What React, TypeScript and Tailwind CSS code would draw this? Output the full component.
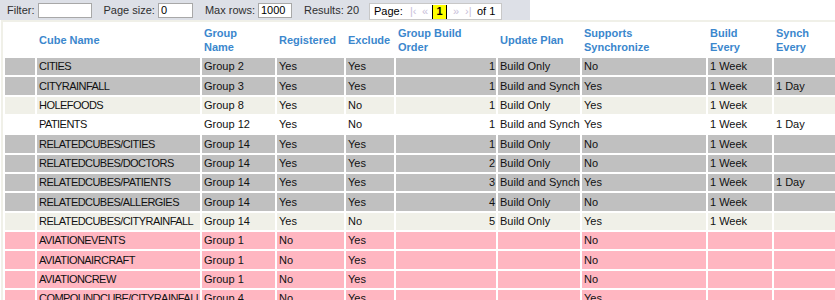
import React from "react";

type Tone = "gray" | "beige" | "white" | "pink";

interface CubeRow {
  name: string;
  group: string;
  registered: string;
  exclude: string;
  order: string;
  plan: string;
  sync: string;
  buildEvery: string;
  synchEvery: string;
  tone: Tone;
}

const rows: CubeRow[] = [
  { name: "CITIES", group: "Group 2", registered: "Yes", exclude: "Yes", order: "1", plan: "Build Only", sync: "No", buildEvery: "1 Week", synchEvery: "", tone: "gray" },
  { name: "CITYRAINFALL", group: "Group 3", registered: "Yes", exclude: "Yes", order: "1", plan: "Build and Synch", sync: "Yes", buildEvery: "1 Week", synchEvery: "1 Day", tone: "gray" },
  { name: "HOLEFOODS", group: "Group 8", registered: "Yes", exclude: "No", order: "1", plan: "Build Only", sync: "Yes", buildEvery: "1 Week", synchEvery: "", tone: "beige" },
  { name: "PATIENTS", group: "Group 12", registered: "Yes", exclude: "No", order: "1", plan: "Build and Synch", sync: "Yes", buildEvery: "1 Week", synchEvery: "1 Day", tone: "white" },
  { name: "RELATEDCUBES/CITIES", group: "Group 14", registered: "Yes", exclude: "Yes", order: "1", plan: "Build Only", sync: "No", buildEvery: "1 Week", synchEvery: "", tone: "gray" },
  { name: "RELATEDCUBES/DOCTORS", group: "Group 14", registered: "Yes", exclude: "Yes", order: "2", plan: "Build Only", sync: "No", buildEvery: "1 Week", synchEvery: "", tone: "gray" },
  { name: "RELATEDCUBES/PATIENTS", group: "Group 14", registered: "Yes", exclude: "Yes", order: "3", plan: "Build and Synch", sync: "Yes", buildEvery: "1 Week", synchEvery: "1 Day", tone: "gray" },
  { name: "RELATEDCUBES/ALLERGIES", group: "Group 14", registered: "Yes", exclude: "Yes", order: "4", plan: "Build Only", sync: "No", buildEvery: "1 Week", synchEvery: "", tone: "gray" },
  { name: "RELATEDCUBES/CITYRAINFALL", group: "Group 14", registered: "Yes", exclude: "No", order: "5", plan: "Build Only", sync: "Yes", buildEvery: "1 Week", synchEvery: "", tone: "beige" },
  { name: "AVIATIONEVENTS", group: "Group 1", registered: "No", exclude: "Yes", order: "", plan: "", sync: "No", buildEvery: "", synchEvery: "", tone: "pink" },
  { name: "AVIATIONAIRCRAFT", group: "Group 1", registered: "No", exclude: "Yes", order: "", plan: "", sync: "No", buildEvery: "", synchEvery: "", tone: "pink" },
  { name: "AVIATIONCREW", group: "Group 1", registered: "No", exclude: "Yes", order: "", plan: "", sync: "No", buildEvery: "", synchEvery: "", tone: "pink" },
  { name: "COMPOUNDCUBE/CITYRAINFALL", group: "Group 4", registered: "No", exclude: "Yes", order: "", plan: "", sync: "Yes", buildEvery: "", synchEvery: "", tone: "pink" },
];

const toneClass: Record<Tone, string> = {
  gray: "bg-[#c0c0c0]",
  beige: "bg-[#f0f0e8]",
  white: "bg-white",
  pink: "bg-[#ffb6c1]",
};

const headers = [
  "",
  "Cube Name",
  "Group\nName",
  "Registered",
  "Exclude",
  "Group Build\nOrder",
  "Update Plan",
  "Supports\nSynchronize",
  "Build\nEvery",
  "Synch\nEvery",
];

function Toolbar() {
  return (
    <div className="flex h-[20px] w-[530px] items-center bg-[#dde0e7] text-[11px] text-[#2f2f2f]">
      <span className="ml-[7px]">Filter:</span>
      <input
        className="ml-[3px] h-[15px] w-[54px] border border-[#a8a8a8] bg-white px-[2px] text-[11px] text-black outline-none"
        defaultValue=""
      />
      <span className="ml-[12px]">Page size:</span>
      <input
        className="ml-[3px] h-[15px] w-[35px] border border-[#a8a8a8] bg-white px-[2px] text-[11px] text-black outline-none"
        defaultValue="0"
      />
      <span className="ml-[12px]">Max rows:</span>
      <input
        className="ml-[3px] h-[15px] w-[34px] border border-[#a8a8a8] bg-white px-[2px] text-[11px] text-black outline-none"
        defaultValue="1000"
      />
      <span className="ml-[12px]">Results: 20</span>
      <div className="ml-auto mr-[28px] mt-[3px] flex h-[17px] w-[133px] items-center border border-[#c8c8c8] bg-white text-black">
        <span className="w-[36px] pl-[4px]">Page:</span>
        <span className="w-[16px] pl-[4px] text-[11px] text-[#c9c0da]">|‹</span>
        <span className="w-[10px] text-[11px] text-[#c9c0da]">«</span>
        <span className="flex h-[14px] w-[15px] items-center justify-center border-x border-black bg-[#ffff00] font-bold">
          1
        </span>
        <span className="ml-[6px] w-[12px] text-[11px] text-[#c9c0da]">»</span>
        <span className="w-[12px] text-[11px] text-[#c9c0da]">›|</span>
        <span>of 1</span>
      </div>
    </div>
  );
}

export default function App() {
  return (
    <div className="h-[300px] w-[835px] overflow-hidden bg-white font-['Liberation_Sans',Arial,sans-serif] text-[11px] text-[#111]">
      <Toolbar />
      <div className="ml-px border-l-2 border-t-2 border-[#f0f0e8]">
        <div className="grid grid-cols-[30px_163px_73px_67px_48px_100px_82px_124px_64px_1fr] grid-rows-[32px] auto-rows-[17.33px] gap-[2px] py-[2px] pl-[2px]">
          {headers.map((h, i) => (
            <div
              key={`h${i}`}
              className="flex items-center whitespace-pre-line px-[2px] font-bold leading-[14px] text-[#3b87cd]"
            >
              {h}
            </div>
          ))}
          {rows.map((r, ri) => {
            const bg = toneClass[r.tone];
            const cells = [
              "",
              r.name,
              r.group,
              r.registered,
              r.exclude,
              r.order,
              r.plan,
              r.sync,
              r.buildEvery,
              r.synchEvery,
            ];
            return cells.map((c, ci) => (
              <div
                key={`r${ri}c${ci}`}
                className={`${bg} flex items-center overflow-hidden whitespace-nowrap px-[2px] ${
                  ci === 5 ? "justify-end pr-px" : ""
                } ${ci === 1 ? "tracking-[-0.55px]" : ""}`}
              >
                {c}
              </div>
            ));
          })}
        </div>
      </div>
    </div>
  );
}
